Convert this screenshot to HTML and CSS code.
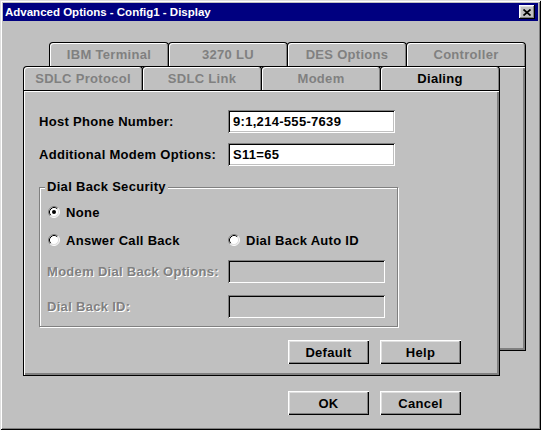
FILE: index.html
```html
<!DOCTYPE html>
<html>
<head>
<meta charset="utf-8">
<link rel="stylesheet" href="styles.css">
</head>
<body>
<div class="window">
  <div class="titlebar">
    <span class="title">Advanced Options - Config1 - Display</span>
    <span class="close"><svg width="8" height="7" viewBox="0 0 8 7"><path d="M0.5 0.5 L7.5 6.5 M7.5 0.5 L0.5 6.5" stroke="#000" stroke-width="1.7" fill="none"/></svg></span>
  </div>
  <div class="client">
    <div class="tabstack">
      <div class="sheet back">
        <div class="tabrow">
          <div class="tab">IBM Terminal</div>
          <div class="tab">3270 LU</div>
          <div class="tab">DES Options</div>
          <div class="tab">Controller</div>
        </div>
        <div class="panel"></div>
      </div>
      <div class="sheet front">
        <div class="tabrow">
          <div class="tab">SDLC Protocol</div>
          <div class="tab">SDLC Link</div>
          <div class="tab">Modem</div>
          <div class="tab active">Dialing</div>
        </div>
        <div class="panel content">
          <div class="form">
            <span class="label">Host Phone Number:</span>
            <span class="field">9:1,214-555-7639</span>
            <span class="label">Additional Modem Options:</span>
            <span class="field">S11=65</span>
          </div>
          <div class="group">
            <span class="legend">Dial Back Security</span>
            <div class="ggrid">
              <span class="radio"><svg width="12" height="12" viewBox="0 0 12 12"><circle cx="6" cy="6" r="5" fill="#fff"/><path d="M2.11 9.89 A5.5 5.5 0 0 1 9.89 2.11" stroke="#808080" fill="none"/><path d="M9.89 2.11 A5.5 5.5 0 0 1 2.11 9.89" stroke="#fff" fill="none"/><path d="M2.82 9.18 A4.5 4.5 0 0 1 9.18 2.82" stroke="#000" fill="none"/><path d="M9.18 2.82 A4.5 4.5 0 0 1 2.82 9.18" stroke="#dfdfdf" fill="none"/><circle cx="6" cy="6" r="2" fill="#000"/></svg>None</span>
              <span></span>
              <span class="radio"><svg width="12" height="12" viewBox="0 0 12 12"><circle cx="6" cy="6" r="5" fill="#fff"/><path d="M2.11 9.89 A5.5 5.5 0 0 1 9.89 2.11" stroke="#808080" fill="none"/><path d="M9.89 2.11 A5.5 5.5 0 0 1 2.11 9.89" stroke="#fff" fill="none"/><path d="M2.82 9.18 A4.5 4.5 0 0 1 9.18 2.82" stroke="#000" fill="none"/><path d="M9.18 2.82 A4.5 4.5 0 0 1 2.82 9.18" stroke="#dfdfdf" fill="none"/></svg>Answer Call Back</span>
              <span class="radio"><svg width="12" height="12" viewBox="0 0 12 12"><circle cx="6" cy="6" r="5" fill="#fff"/><path d="M2.11 9.89 A5.5 5.5 0 0 1 9.89 2.11" stroke="#808080" fill="none"/><path d="M9.89 2.11 A5.5 5.5 0 0 1 2.11 9.89" stroke="#fff" fill="none"/><path d="M2.82 9.18 A4.5 4.5 0 0 1 9.18 2.82" stroke="#000" fill="none"/><path d="M9.18 2.82 A4.5 4.5 0 0 1 2.82 9.18" stroke="#dfdfdf" fill="none"/></svg>Dial Back Auto ID</span>
              <span class="label disabled sub">Modem Dial Back Options:</span>
              <span class="field off"></span>
              <span class="label disabled sub">Dial Back ID:</span>
              <span class="field off"></span>
            </div>
          </div>
          <div class="buttons">
            <span class="btn">Default</span>
            <span class="btn">Help</span>
          </div>
        </div>
      </div>
    </div>
    <div class="buttons dlg">
      <span class="btn">OK</span>
      <span class="btn">Cancel</span>
    </div>
  </div>
</div>
</body>
</html>
```
FILE: styles.css
```css
* { box-sizing: border-box; }
html, body { margin: 0; padding: 0; }
body {
  background: #c0c0c0;
  font-family: "Liberation Sans", Arial, sans-serif;
  font-weight: bold;
  font-size: 13px;
  letter-spacing: 0.3px;
  color: #000;
}
.window {
  width: 541px;
  height: 430px;
  background: #c0c0c0;
  padding: 3px;
  box-shadow: inset 1px 1px 0 #dfdfdf, inset -1px -1px 0 #000, inset 2px 2px 0 #fff, inset -2px -2px 0 #808080;
  display: flex;
  flex-direction: column;
}
.titlebar {
  height: 18px;
  background: #000080;
  color: #fff;
  display: flex;
  align-items: center;
  justify-content: space-between;
  padding: 0 3px 0 2px;
}
.title { font-size: 11.5px; letter-spacing: 0; }
.close {
  width: 16px;
  height: 14px;
  background: #c0c0c0;
  box-shadow: inset -1px -1px 0 #000, inset 1px 1px 0 #fff, inset -2px -2px 0 #808080, inset 2px 2px 0 #dfdfdf;
  display: flex;
  align-items: center;
  justify-content: center;
}
.close svg { display: block; }
.client { flex: 1; display: flex; flex-direction: column; }
.tabstack { display: grid; }
.sheet { grid-area: 1 / 1; width: 477px; display: flex; flex-direction: column; }
.sheet.back { margin: 21px 0 0 46px; height: 309px; }
.sheet.front { margin: 45px 0 0 20px; height: 310px; }
.tabrow { display: flex; height: 24px; }
.tab {
  flex: 1;
  margin-right: -1px;
  border: 1px solid #000;
  border-bottom: 0;
  border-radius: 4px 4px 0 0;
  box-shadow: inset 1px 1px 0 #fff, inset -1px 0 0 #808080;
  background: #c0c0c0;
  color: #808080;
  display: flex;
  align-items: center;
  justify-content: center;
}
.tab:last-child { margin-right: 0; }
.tab.active { color: #000; }
.panel {
  flex: 1;
  border: 1px solid #000;
  background: #c0c0c0;
  box-shadow: inset 1px 1px 0 #fff, inset -2px -2px 0 #808080;
}
.content { padding: 19px 0 0 15px; }
.form {
  display: grid;
  grid-template-columns: 189px 167px;
  grid-auto-rows: 23px;
  row-gap: 10px;
}
.label { display: flex; align-items: center; }
.field {
  display: flex;
  align-items: center;
  padding-left: 5px;
  background: #fff;
  box-shadow: inset 1px 1px 0 #808080, inset -1px -1px 0 #fff, inset 2px 2px 0 #000, inset -2px -2px 0 #c0c0c0;
}
.field.off { background: #c0c0c0; }
.group {
  position: relative;
  margin-top: 21px;
  width: 359px;
  height: 140px;
  border: 1px solid #808080;
  box-shadow: inset 1px 1px 0 #fff, 1px 1px 0 #fff;
  padding: 16px 0 0 8px;
}
.legend {
  position: absolute;
  top: -9px;
  left: 5px;
  padding: 0 2px;
  background: #c0c0c0;
  line-height: 16px;
}
.ggrid {
  display: grid;
  grid-template-columns: 180px 157px;
  grid-template-rows: 16px 16px 23px 23px;
  row-gap: 12px;
}
.radio { display: flex; align-items: center; gap: 6px; }
.radio svg { display: block; flex: none; }
.disabled { color: #808080; text-shadow: 1px 1px 0 #fff; }
.sub { margin-left: -1px; }
.buttons { display: flex; gap: 11px; margin: 13px 0 0 249px; }
.buttons.dlg { margin: 15px 0 0 285px; }
.btn {
  width: 81px;
  height: 24px;
  display: flex;
  align-items: center;
  justify-content: center;
  background: #c0c0c0;
  box-shadow: inset 1px 1px 0 #fff, inset -1px -1px 0 #000, inset -2px -2px 0 #808080, inset 2px 2px 0 #dfdfdf;
}
```
